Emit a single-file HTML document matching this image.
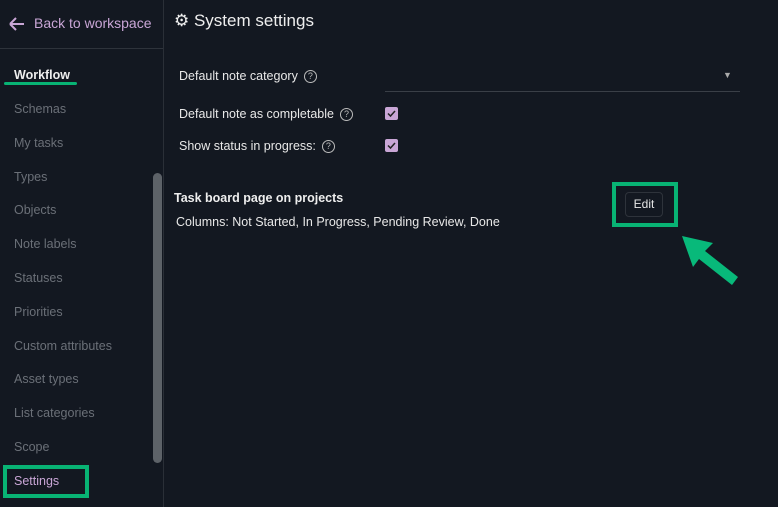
<html><head><style>
body{margin:0;width:778px;height:507px;background:#131821;font-family:"Liberation Sans",sans-serif;position:relative;overflow:hidden;color:#e6e6e6}
.a{position:absolute;white-space:nowrap}
.side{position:absolute;left:0;top:0;width:163px;height:507px;border-right:1px solid #2a2f37}
.nav{position:absolute;left:14px;font-size:12.5px;color:#6b7078}
.q{display:inline-block;width:11px;height:11px;border:1.3px solid #bbb;border-radius:50%;font-size:9px;line-height:11px;text-align:center;color:#bbb;margin-left:6px;vertical-align:1px}
.cb{position:absolute;left:385px;width:13px;height:13px;background:#c9a6d6;border-radius:2px}
.l{font-size:12.5px;color:#e8e8e8}
</style></head><body>
<div class="side"></div>
<div class="a" style="left:0;top:48px;width:163px;height:1px;background:#2e333b"></div>
<svg class="a" style="left:8px;top:17px" width="18" height="14"><path d="M2 7H16M2 7L8 1M2 7L8 13" stroke="#c9a6d6" stroke-width="2" fill="none"/></svg>
<div class="a" style="left:34px;top:15px;color:#c9a6d6;font-size:14px">Back to workspace</div>
<div class="a" style="left:14px;top:68px;font-size:12.5px;font-weight:bold;color:#eee">Workflow</div>
<div class="a" style="left:4px;top:82px;width:73px;height:3px;background:#08b374;border-radius:2px"></div>
<div class="nav a" style="top:102px">Schemas</div>
<div class="nav a" style="top:136px">My tasks</div>
<div class="nav a" style="top:170px">Types</div>
<div class="nav a" style="top:203px">Objects</div>
<div class="nav a" style="top:237px">Note labels</div>
<div class="nav a" style="top:271px">Statuses</div>
<div class="nav a" style="top:305px">Priorities</div>
<div class="nav a" style="top:339px">Custom attributes</div>
<div class="nav a" style="top:372px">Asset types</div>
<div class="nav a" style="top:406px">List categories</div>
<div class="nav a" style="top:440px">Scope</div>
<div class="nav a" style="top:474px;color:#c9a6d6">Settings</div>
<div class="a" style="left:3px;top:465px;width:78px;height:25px;border:4px solid #08b374"></div>
<div class="a" style="left:153px;top:173px;width:9px;height:290px;background:#5d6268;border-radius:5px"></div>
<div class="a" style="left:174px;top:11px;font-size:17px;color:#eee">⚙ System settings</div>
<div class="a l" style="left:179px;top:69px">Default note category<span class="q">?</span></div>
<div class="a" style="left:385px;top:91px;width:355px;height:1px;background:#3a3f47"></div>
<div class="a" style="left:723px;top:70px;font-size:9px;color:#aaa">▼</div>
<div class="a l" style="left:179px;top:107px">Default note as completable<span class="q">?</span></div>
<div class="cb" style="top:107px"><svg width="13" height="13"><path d="M3 6.5L5.5 9L10 4" stroke="#222" stroke-width="1.5" fill="none"/></svg></div>
<div class="a l" style="left:179px;top:139px">Show status in progress:<span class="q">?</span></div>
<div class="cb" style="top:139px"><svg width="13" height="13"><path d="M3 6.5L5.5 9L10 4" stroke="#222" stroke-width="1.5" fill="none"/></svg></div>
<div class="a" style="left:174px;top:191px;font-size:12.5px;font-weight:bold;color:#eee">Task board page on projects</div>
<div class="a l" style="left:176px;top:215px">Columns: Not Started, In Progress, Pending Review, Done</div>
<div class="a" style="left:612px;top:182px;width:58px;height:37px;border:4px solid #08b374"></div>
<div class="a" style="left:625px;top:192px;width:36px;height:23px;border:1px solid #2e333b;border-radius:4px;font-size:12px;text-align:center;line-height:23px">Edit</div>
<svg class="a" style="left:0;top:0" width="778" height="507"><polygon points="682,236 713,243 705,251 738,277 732,285 699,259 693,267" fill="#08b97a"/></svg>
</body></html>
